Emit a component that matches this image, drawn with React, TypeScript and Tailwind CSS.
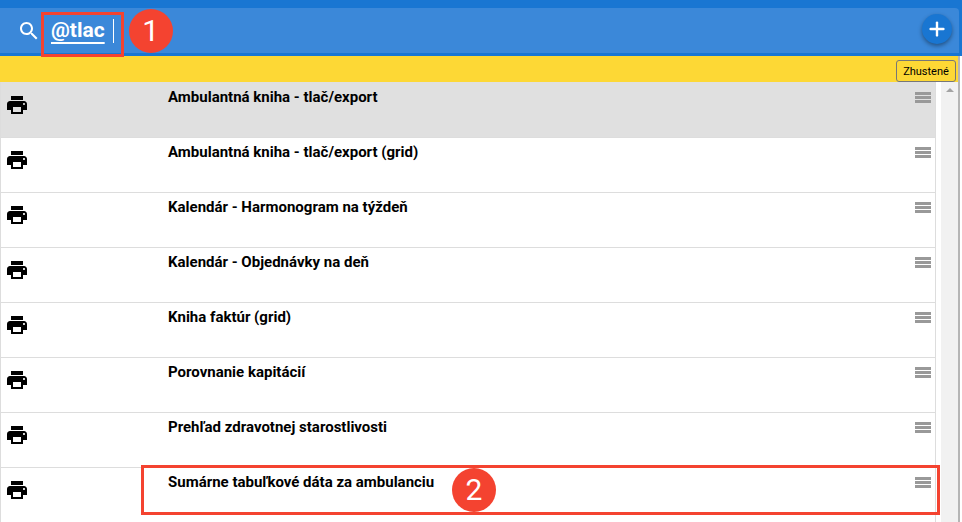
import { Plus } from "lucide-react";

const rows = [
  "Ambulantná kniha - tlač/export",
  "Ambulantná kniha - tlač/export (grid)",
  "Kalendár - Harmonogram na týždeň",
  "Kalendár - Objednávky na deň",
  "Kniha faktúr (grid)",
  "Porovnanie kapitácií",
  "Prehľad zdravotnej starostlivosti",
  "Sumárne tabuľkové dáta za ambulanciu",
];

function PrinterIcon() {
  return (
    <svg width="24" height="24" viewBox="0 0 24 24" fill="#000">
      <path d="M19 8H5c-1.66 0-3 1.34-3 3v6h4v4h12v-4h4v-6c0-1.66-1.34-3-3-3zm-3 11H8v-5h8v5zm3-7c-.55 0-1-.45-1-1s.45-1 1-1 1 .45 1 1-.45 1-1 1zm-1-9H6v4h12V3z" />
    </svg>
  );
}

function SearchIcon() {
  return (
    <svg width="24" height="24" viewBox="0 0 24 24" fill="#fff">
      <path d="M15.5 14h-.79l-.28-.27C15.41 12.59 16 11.11 16 9.5 16 5.91 13.09 3 9.5 3S3 5.91 3 9.5 5.91 16 9.5 16c1.61 0 3.09-.59 4.23-1.57l.27.28v.79l5 4.99L20.49 19l-4.99-5zm-6 0C7.01 14 5 11.99 5 9.5S7.01 5 9.5 5 14 7.01 14 9.5 11.99 14 9.5 14z" />
    </svg>
  );
}

export default function App() {
  return (
    <div className="relative h-[522px] w-[962px] overflow-hidden bg-white font-['Roboto',sans-serif]">
      <div className="flex h-[56px] flex-col bg-[#1976d2] pt-2 pb-[3px] pr-[3px]">
        <div className="flex h-[45px] items-center rounded-tr-[4px] bg-[#3b88d9] pl-[17px] pr-[7px]">
          <SearchIcon />
          <div className="ml-[10px] text-[21px] font-bold leading-none text-white underline decoration-2 underline-offset-[5px]">@tlac</div>
          <div className="ml-2 h-[24px] w-px bg-white" />
          <div className="ml-[15px] flex h-11 w-11 items-center justify-center rounded-full bg-[#f44330] text-[30px] leading-none text-white">1</div>
          <div className="ml-auto flex h-[30px] w-[30px] -translate-y-[2px] items-center justify-center rounded-full bg-[#1976d2] shadow-[0_2px_4px_rgba(0,0,0,0.4)]">
            <Plus size={22} strokeWidth={2.6} className="text-white" />
          </div>
        </div>
      </div>
      <div className="flex h-[466px]">
        <div className="w-[958px]">
          <div className="flex h-[26px] items-start justify-end bg-[#fdd835] pr-[2px] pt-1">
            <button className="h-[22px] w-[60px] rounded-[3px] border border-[#777] bg-[#fdd835] text-[11px] leading-none text-black">Zhustené</button>
          </div>
          <div className="flex h-[440px]">
            <div className="w-[936px] border-x border-[#ddd]">
              <div className="h-px bg-[#e0e0e0]" />
              {rows.map((r, i) => (
                <div key={r} className={`flex h-[55px] border-b border-[#ddd] ${i === 0 ? "bg-[#e0e0e0]" : "bg-white"}`}>
                  <div className="w-[167px] pl-[4px] pt-[10px]"><PrinterIcon /></div>
                  <div className="flex-1 pt-[5px] text-[15px] font-bold leading-[18px] text-black">{r}</div>
                  <div className="mr-[3px] flex w-[17px] flex-col gap-[1px] pt-[9px]">
                    <div className="h-[3px] w-[16px] bg-[#999]" />
                    <div className="h-[3px] w-[16px] bg-[#999]" />
                    <div className="h-[3px] w-[16px] bg-[#999]" />
                  </div>
                </div>
              ))}
            </div>
            <div className="ml-[5px] flex w-[17px] justify-center bg-[#f1f1f1] pt-[6px]">
              <div className="h-0 w-0 border-x-[4px] border-b-[4px] border-x-transparent border-b-[#a3a3a3]" />
            </div>
          </div>
        </div>
        <div className="w-[2px] bg-[#b5b5b5]" />
      </div>
      <div className="absolute left-[41px] top-[12px] h-[45px] w-[83px] border-[3px] border-[#f44330]" />
      <div className="absolute left-[141px] top-[465px] h-[50px] w-[799px] border-[3px] border-[#f44330]" />
      <div className="absolute left-[452px] top-[468px] flex h-11 w-11 items-center justify-center rounded-full bg-[#f44330] text-[30px] leading-none text-white">2</div>
    </div>
  );
}
